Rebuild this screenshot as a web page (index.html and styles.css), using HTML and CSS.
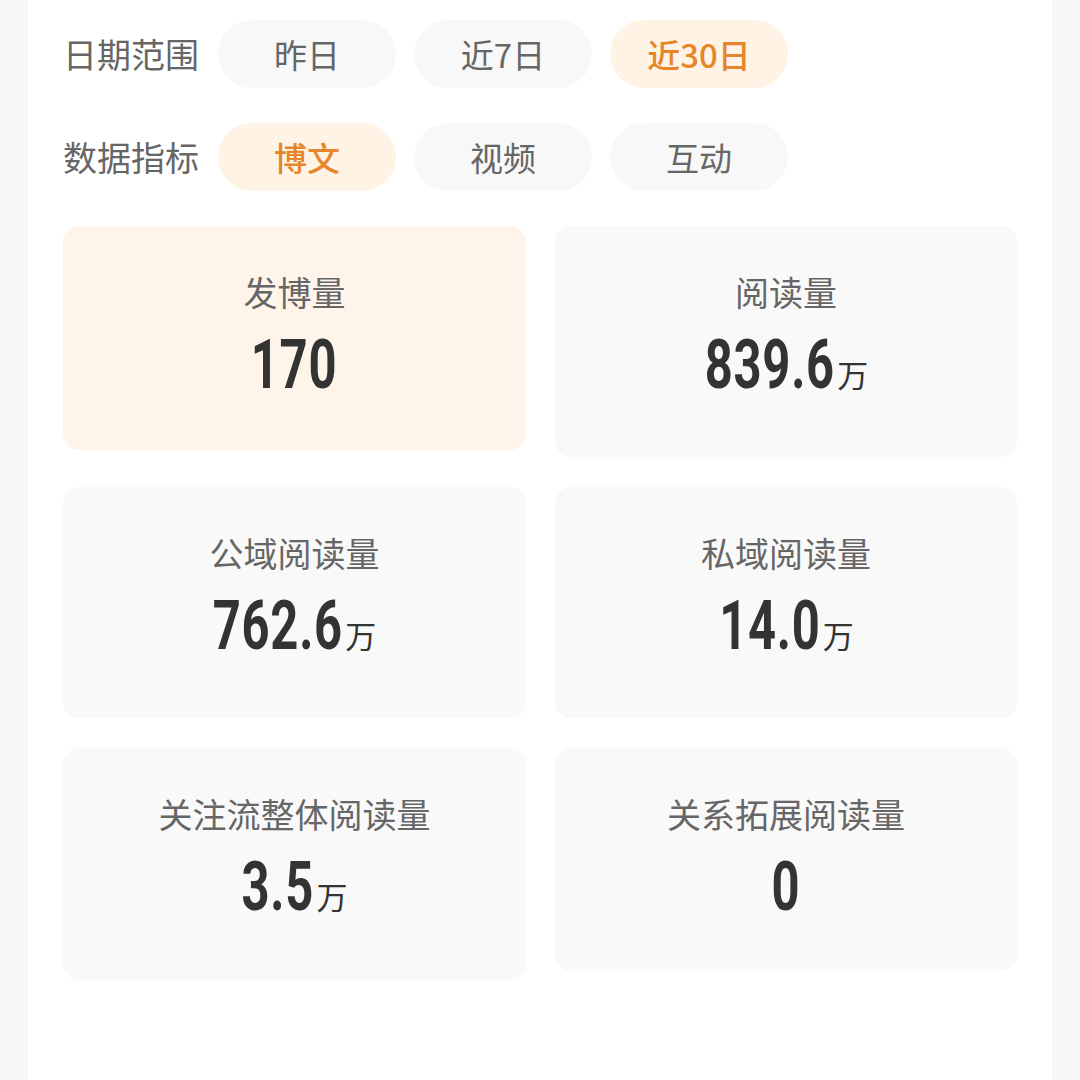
FILE: index.html
```html
<!DOCTYPE html>
<html lang="zh-CN">
<head>
<meta charset="utf-8">
<title>数据概览</title>
<link rel="stylesheet" href="styles.css">
</head>
<body>
<main class="panel">
  <div class="filter-row">
    <div class="filter-label">日期范围</div>
    <div class="pill">昨日</div>
    <div class="pill">近7日</div>
    <div class="pill pill-active">近30日</div>
  </div>
  <div class="filter-row">
    <div class="filter-label">数据指标</div>
    <div class="pill pill-active">博文</div>
    <div class="pill">视频</div>
    <div class="pill">互动</div>
  </div>

  <div class="stats">
    <div class="card card-active card-h224">
      <div class="card-label">发博量</div>
      <div class="card-value"><span class="num">170</span></div>
    </div>
    <div class="card">
      <div class="card-label">阅读量</div>
      <div class="card-value"><span class="num">839.6<span class="unit">万</span></span></div>
    </div>
    <div class="card">
      <div class="card-label">公域阅读量</div>
      <div class="card-value"><span class="num">762.6<span class="unit">万</span></span></div>
    </div>
    <div class="card">
      <div class="card-label">私域阅读量</div>
      <div class="card-value"><span class="num">14.0<span class="unit">万</span></span></div>
    </div>
    <div class="card card-h232">
      <div class="card-label">关注流整体阅读量</div>
      <div class="card-value"><span class="num">3.5<span class="unit">万</span></span></div>
    </div>
    <div class="card card-h223">
      <div class="card-label">关系拓展阅读量</div>
      <div class="card-value"><span class="num">0</span></div>
    </div>
  </div>
</main>
</body>
</html>
```
FILE: styles.css
```css
html, body {
  margin: 0;
  padding: 0;
}

body {
  background: #f7f7f7;
  font-family: "Noto Sans CJK SC", "Noto Sans", sans-serif;
  color: #666666;
}

.panel {
  margin: 0 28px;
  min-height: 1080px;
  background: #ffffff;
  padding: 20px 35px 0 35px;
  box-sizing: border-box;
}

.filter-row {
  display: flex;
  align-items: center;
  gap: 18px;
  height: 68px;
  margin-bottom: 35px;
}

.filter-label {
  flex: none;
  width: 137px;
  font-size: 34px;
  line-height: 48px;
  color: #666666;
}

.pill {
  flex: none;
  width: 178px;
  height: 68px;
  border-radius: 34px;
  background: #f8f8f8;
  display: flex;
  align-items: center;
  justify-content: center;
  font-size: 33px;
  color: #666666;
}

.pill-active {
  background: #fff3e6;
  color: #e6862a;
  font-weight: 500;
}

.stats {
  display: grid;
  grid-template-columns: 463px 462px;
  column-gap: 29px;
  row-gap: 30px;
  align-items: start;
}

.card {
  height: 231px;
  box-sizing: border-box;
  border-radius: 16px;
  background: #f9f9f9;
  padding-top: 42px;
  text-align: center;
}

.card-h224 { height: 224px; }
.card-h232 { height: 232px; }
.card-h223 { height: 223px; }

.card-active {
  background: #fff4ea;
}

.card-label {
  font-size: 34px;
  line-height: 48px;
  color: #666666;
}

.card-value {
  margin-top: 15px;
  height: 68px;
  line-height: 68px;
  text-align: center;
}

.num {
  display: inline-block;
  font-family: Roboto, "Liberation Sans", sans-serif;
  font-weight: 700;
  font-size: 68px;
  color: #333333;
  transform: scaleX(0.72);
  transform-origin: center;
  letter-spacing: 1px;
}

.unit {
  display: inline-block;
  font-family: "Noto Sans CJK SC", sans-serif;
  font-weight: 400;
  font-size: 31px;
  line-height: 40px;
  letter-spacing: 0;
  color: #333333;
  transform: scaleX(1.389);
  transform-origin: left center;
  margin-left: 3px;
  margin-right: 12px;
  vertical-align: 1px;
}
```
